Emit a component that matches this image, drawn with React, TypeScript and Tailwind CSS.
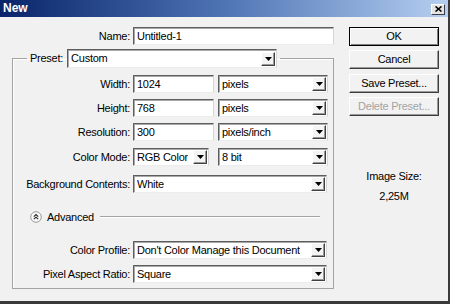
import { ReactNode } from "react";

const sunken =
  "border border-t-[#5e5e5e] border-l-[#5e5e5e] border-r-[#d6d6d6] border-b-[#ececec] bg-white";

function Field({ value, className = "" }: { value: string; className?: string }) {
  return (
    <div className={`${sunken} h-[18px] flex items-center pl-[3px] shadow-[inset_1px_1px_0_#a8a8a8] ${className}`}>
      {value}
    </div>
  );
}

function Select({ value, className = "" }: { value: string; className?: string }) {
  return (
    <div
      className={`${sunken} h-[18px] flex items-center justify-between pl-[3px] shadow-[inset_1px_1px_0_#a8a8a8] ${className}`}
    >
      <span className="whitespace-nowrap overflow-hidden">{value}</span>
      <div className="w-[14px] h-[14px] mr-[1px] flex items-center justify-center bg-[#f4f4f4] border border-t-white border-l-white border-r-[#404040] border-b-[#404040] shadow-[inset_-1px_-1px_0_#9a9a9a]">
        <svg width="7" height="4" viewBox="0 0 7 4">
          <polygon points="0,0 7,0 3.5,4" fill="#000" />
        </svg>
      </div>
    </div>
  );
}

function Btn({
  children,
  primary,
  disabled,
  className = "",
}: {
  children: ReactNode;
  primary?: boolean;
  disabled?: boolean;
  className?: string;
}) {
  return (
    <div
      className={`h-[19px] w-[90px] flex items-center justify-center bg-[#f2f2f2] ${
        primary
          ? "border border-black shadow-[inset_1px_1px_0_#fff,inset_-1px_-1px_0_#808080]"
          : "border border-t-white border-l-white border-r-[#3c3c3c] border-b-[#3c3c3c] shadow-[inset_-1px_-1px_0_#9a9a9a]"
      } ${disabled ? "text-[#a3a3a3]" : "text-black"} ${className}`}
    >
      {children}
    </div>
  );
}

function Row({ label, children, className = "" }: { label: string; children: ReactNode; className?: string }) {
  return (
    <div className={`flex items-center gap-[3px] ${className}`}>
      <div className="w-[117px] text-right whitespace-nowrap">{label}</div>
      {children}
    </div>
  );
}

export default function App() {
  return (
    <div className="w-[450px] h-[304px] flex flex-col bg-[#f1f1f1] text-[11px] leading-[13px] tracking-[-0.25px] text-black font-['Liberation_Sans',Arial,sans-serif] border-r-2 border-b-[3px] border-r-[#3a3a3a] border-b-[#3a3a3a] overflow-hidden">
      {/* title bar */}
      <div className="h-[17px] shrink-0 flex items-center justify-between pl-[3px] pr-[3px] bg-gradient-to-r from-[#0a246a] via-[#4f74b4] to-[#b6cff0]">
        <span className="text-white font-bold text-[12px] tracking-normal">New</span>
        <div className="w-[14px] h-[11px] mt-[1px] flex items-center justify-center bg-[#e4e4e4] border border-t-white border-l-white border-r-[#404040] border-b-[#404040]">
          <svg width="7" height="6" viewBox="0 0 7 6">
            <path d="M0.5 0.5 L6.5 5.5 M6.5 0.5 L0.5 5.5" stroke="#000" strokeWidth="1.6" />
          </svg>
        </div>
      </div>

      <div className="flex flex-1">
        {/* left side */}
        <div className="w-[349px] pt-[10px]">
          <div className="flex items-center gap-[3px]">
            <div className="w-[130px] text-right">Name:</div>
            <Field value="Untitled-1" className="w-[201px]" />
          </div>

          <fieldset className="mt-[4px] ml-[12px] w-[322px] border border-[#a3a3a3] shadow-[inset_1px_1px_0_#fff] pb-[5px]">
            <legend className="ml-[14px] px-[3px]">
              <div className="flex items-center gap-[4px] h-[19px]">
                <span>Preset:</span>
                <Select value="Custom" className="w-[210px] h-[19px]" />
              </div>
            </legend>

            <Row label="Width:" className="mt-[7px]">
              <Field value="1024" className="w-[81px]" />
              <Select value="pixels" className="ml-[1px] w-[110px]" />
            </Row>
            <Row label="Height:" className="mt-[6px]">
              <Field value="768" className="w-[81px]" />
              <Select value="pixels" className="ml-[1px] w-[110px]" />
            </Row>
            <Row label="Resolution:" className="mt-[6px]">
              <Field value="300" className="w-[81px]" />
              <Select value="pixels/inch" className="ml-[1px] w-[110px]" />
            </Row>
            <Row label="Color Mode:" className="mt-[7px]">
              <Select value="RGB Color" className="w-[76px]" />
              <Select value="8 bit" className="ml-[6px] w-[110px]" />
            </Row>
            <Row label="Background Contents:" className="mt-[9px]">
              <Select value="White" className="w-[194px]" />
            </Row>

            <div className="mt-[17px] h-[14px] flex items-center pl-[17px] pr-[13px]">
              <svg width="12" height="12" viewBox="0 0 12 12">
                <circle cx="6" cy="6" r="5.3" fill="#f8f8f8" stroke="#9a9a9a" strokeWidth="1" />
                <path d="M3.8 5.6 L6 3.6 L8.2 5.6 M3.8 8.2 L6 6.2 L8.2 8.2" fill="none" stroke="#222" strokeWidth="1.1" />
              </svg>
              <span className="ml-[5px]">Advanced</span>
              <div className="ml-[6px] flex-1 h-[2px] border-t border-t-[#a3a3a3] border-b border-b-white" />
            </div>

            <Row label="Color Profile:" className="mt-[17px]">
              <Select value="Don't Color Manage this Document" className="w-[194px]" />
            </Row>
            <Row label="Pixel Aspect Ratio:" className="mt-[6px]">
              <Select value="Square" className="w-[194px]" />
            </Row>
          </fieldset>
        </div>

        {/* right side */}
        <div className="w-[90px] pt-[10px] flex flex-col">
          <Btn primary>OK</Btn>
          <Btn className="mt-[4px]">Cancel</Btn>
          <Btn className="mt-[5px]">Save Preset...</Btn>
          <Btn disabled className="mt-[4px]">
            Delete Preset...
          </Btn>
          <div className="mt-[54px] text-center">Image Size:</div>
          <div className="mt-[7px] text-center">2,25M</div>
        </div>
      </div>
    </div>
  );
}
